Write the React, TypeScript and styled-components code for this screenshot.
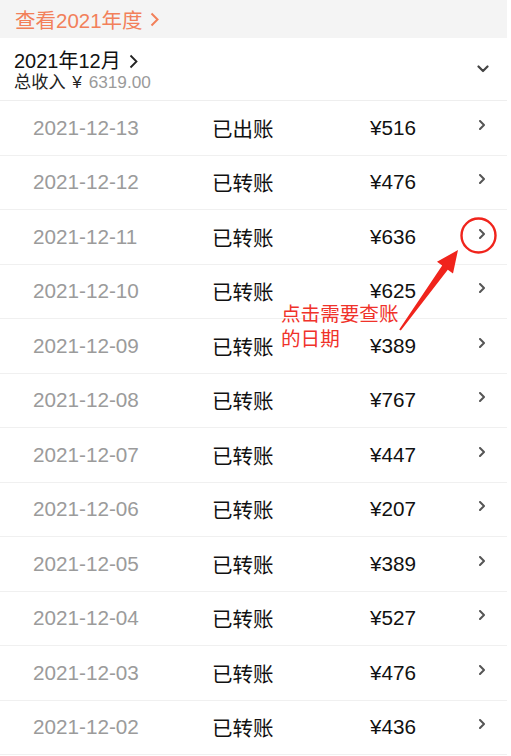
import React from "react";
import styled, { createGlobalStyle } from "styled-components";

const Global = createGlobalStyle`
  html, body { margin: 0; padding: 0; background: #fff; }
  body { font-family: "Liberation Sans", "Noto Sans CJK SC", sans-serif; }
`;

const Page = styled.div`
  position: relative;
  width: 507px;
  height: 756px;
  overflow: hidden;
  background: #fff;
`;

const YearBar = styled.div`
  height: 38px;
  background: #f4f4f4;
  display: flex;
  align-items: center;
  padding-left: 15px;
  gap: 7px;
  color: #f2805a;
  font-size: 20.5px;
`;

const MonthHead = styled.div`
  height: 62px;
  display: flex;
  align-items: center;
  justify-content: space-between;
  padding: 0 18px 0 14px;
  border-bottom: 1px solid #eeeeee;
`;

const MonthInfo = styled.div`
  display: flex;
  flex-direction: column;
  padding-top: 2px;
`;

const MonthTitle = styled.div`
  display: flex;
  align-items: center;
  gap: 8px;
  font-size: 20px;
  line-height: 24px;
  color: #111;
`;

const Income = styled.div`
  font-size: 17.2px;
  line-height: 18px;
  word-spacing: 2px;
  color: #222;
`;

const IncomeValue = styled.span`
  color: #9a9a9a;
`;

const List = styled.div`
  display: flex;
  flex-direction: column;
`;

const Row = styled.div`
  height: 53.5px;
  border-bottom: 1px solid #f0f0f0;
  display: grid;
  grid-template-columns: 179px 158px 1fr 28px;
  align-items: center;
  padding-left: 33px;
  font-size: 20.7px;
`;

const DateCell = styled.div`
  color: #9b9b9b;
`;

const StatusCell = styled.div`
  color: #111;
  font-family: "Noto Sans CJK SC", sans-serif;
  font-size: 20.5px;
`;

const AmountCell = styled.div`
  color: #111;
`;

const ChevronCell = styled.div`
  display: flex;
  align-items: center;
  padding-bottom: 6px;
`;

const Note = styled.div`
  position: absolute;
  left: 281px;
  top: 300px;
  color: #f0322a;
  font-family: "Noto Sans CJK SC", sans-serif;
  font-size: 19.6px;
  line-height: 25px;
`;

const Overlay = styled.svg`
  position: absolute;
  left: 0;
  top: 0;
  pointer-events: none;
`;

const RightChevron = ({ size = 10, color = "#555", w = 2 }: { size?: number; color?: string; w?: number }) => (
  <svg width={size * 0.6} height={size} viewBox="0 0 6 10">
    <path d="M1 1 L5 5 L1 9" fill="none" stroke={color} strokeWidth={w} strokeLinecap="round" strokeLinejoin="round" />
  </svg>
);

const rows = [
  ["2021-12-13", "已出账", "¥516"],
  ["2021-12-12", "已转账", "¥476"],
  ["2021-12-11", "已转账", "¥636"],
  ["2021-12-10", "已转账", "¥625"],
  ["2021-12-09", "已转账", "¥389"],
  ["2021-12-08", "已转账", "¥767"],
  ["2021-12-07", "已转账", "¥447"],
  ["2021-12-06", "已转账", "¥207"],
  ["2021-12-05", "已转账", "¥389"],
  ["2021-12-04", "已转账", "¥527"],
  ["2021-12-03", "已转账", "¥476"],
  ["2021-12-02", "已转账", "¥436"],
];

export default function App() {
  return (
    <Page>
      <Global />
      <YearBar>
        <span>查看2021年度</span>
        <svg width="9" height="15" viewBox="0 0 9 15">
          <path d="M1.5 1.5 L7.5 7.5 L1.5 13.5" fill="none" stroke="#f2805a" strokeWidth="2" />
        </svg>
      </YearBar>
      <MonthHead>
        <MonthInfo>
          <MonthTitle>
            <span>2021年12月</span>
            <svg width="9" height="15" viewBox="0 0 9 15">
              <path d="M1.5 1.5 L7.5 7.5 L1.5 13.5" fill="none" stroke="#222" strokeWidth="1.8" />
            </svg>
          </MonthTitle>
          <Income>
            总收入 ¥ <IncomeValue>6319.00</IncomeValue>
          </Income>
        </MonthInfo>
        <svg width="12" height="8" viewBox="0 0 12 8">
          <path d="M1.5 1.5 L6 6 L10.5 1.5" fill="none" stroke="#444" strokeWidth="2.2" strokeLinecap="round" strokeLinejoin="round" />
        </svg>
      </MonthHead>
      <List>
        {rows.map(([d, s, a]) => (
          <Row key={d}>
            <DateCell>{d}</DateCell>
            <StatusCell>{s}</StatusCell>
            <AmountCell>{a}</AmountCell>
            <ChevronCell>
              <RightChevron />
            </ChevronCell>
          </Row>
        ))}
      </List>
      <Note>
        点击需要查账
        <br />
        的日期
      </Note>
      <Overlay width="511" height="756" viewBox="0 0 511 756">
        <circle cx="478.5" cy="235.5" r="17" fill="none" stroke="#f0241c" strokeWidth="2.4" />
        <path
          d="M399.2 329.4 L442.2 265.6 L437 261.8 L458 250 L453 273.6 L447.8 269.8 L400.8 330.6 Z"
          fill="#f0241c"
        />
      </Overlay>
    </Page>
  );
}
